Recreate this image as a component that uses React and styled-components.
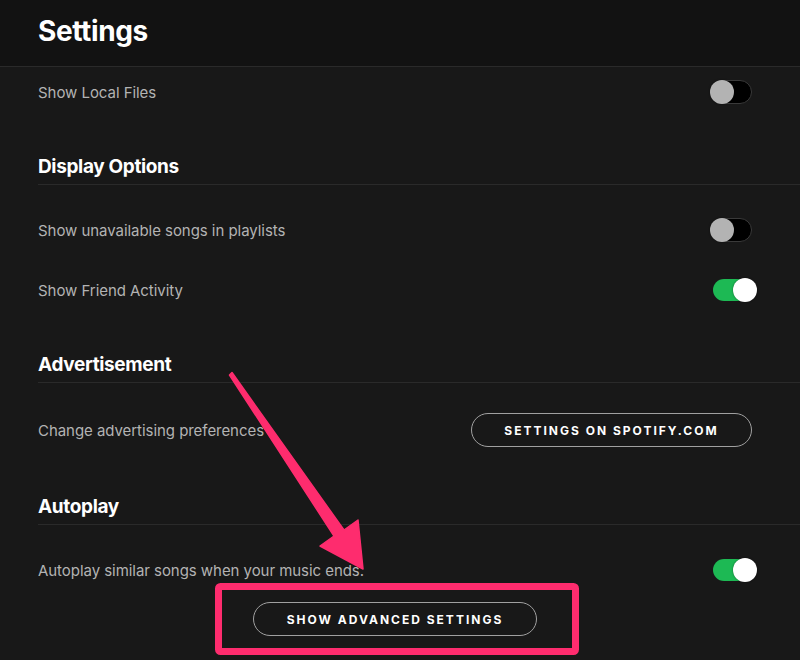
import React from 'react'
import styled, { createGlobalStyle } from 'styled-components'

const GlobalStyle = createGlobalStyle`
  html, body {
    margin: 0;
    background: #181818;
  }
  * { box-sizing: border-box; }
`

const Page = styled.div`
  position: relative;
  width: 800px;
  height: 660px;
  overflow: hidden;
  background: #181818;
  font-family: Inter, "Liberation Sans", sans-serif;
  color: #b3b3b3;
`

const Header = styled.header`
  height: 67px;
  background: #121212;
  border-bottom: 1px solid #2a2a2a;
  padding: 14px 38px 0;
`

const Title = styled.h1`
  margin: 0;
  font-size: 28px;
  line-height: 34px;
  font-weight: 700;
  color: #fff;
  letter-spacing: -0.4px;
`

const Content = styled.main`
  padding-left: 38px;
`

const Section = styled.section`
  padding-top: ${p => p.$top || 0}px;
`

const Heading = styled.h2`
  margin: 0 0 15px;
  padding-top: 1px;
  padding-bottom: 5px;
  border-bottom: 1px solid #2a2a2a;
  font-size: 19px;
  line-height: 24px;
  font-weight: 700;
  color: #fff;
  letter-spacing: -0.35px;
`

const Row = styled.div`
  display: flex;
  align-items: center;
  justify-content: space-between;
  height: ${p => p.$h || 60}px;
  padding-right: 43px;
`

const Label = styled.span`
  font-size: 15px;
  color: #b3b3b3;
  letter-spacing: -0.05px;
`

const Switch = styled.div`
  position: relative;
  width: 47px;
  height: 24px;
`

const Track = styled.div`
  position: absolute;
  top: ${p => (p.$on ? 1 : 0)}px;
  left: ${p => (p.$on ? 3 : 0)}px;
  width: ${p => (p.$on ? 40 : 42)}px;
  height: ${p => (p.$on ? 22 : 24)}px;
  border-radius: 12px;
  background: ${p => (p.$on ? '#1db954' : '#000')};
  border: ${p => (p.$on ? 'none' : '1px solid #3a3a3a')};
`

const Knob = styled.div`
  position: absolute;
  top: 0;
  left: ${p => (p.$on ? 23 : 0)}px;
  width: 24px;
  height: 24px;
  border-radius: 50%;
  background: ${p => (p.$on ? '#fff' : '#b3b3b3')};
  box-shadow: 0 0 2px rgba(0, 0, 0, 0.5);
`

const Pill = styled.button`
  width: ${p => p.$w}px;
  height: 34px;
  margin-right: ${p => p.$mr || 0}px;
  border-radius: 17px;
  border: 1px solid #a0a0a0;
  background: transparent;
  color: #fff;
  font-family: inherit;
  font-size: 12px;
  font-weight: 700;
  letter-spacing: 2px;
  text-transform: uppercase;
  padding: 0;
`

const Footer = styled.div`
  display: flex;
  justify-content: center;
  padding: 2px 48px 0 0;
`

const Overlay = styled.svg`
  position: absolute;
  inset: 0;
  pointer-events: none;
`

const Toggle = ({ on }) => (
  <Switch>
    <Track $on={on} />
    <Knob $on={on} />
  </Switch>
)

export default function App() {
  return (
    <Page>
      <GlobalStyle />
      <Header>
        <Title>Settings</Title>
      </Header>
      <Content>
        <Row $h={50}>
          <Label>Show Local Files</Label>
          <Toggle />
        </Row>

        <Section $top={37}>
          <Heading>Display Options</Heading>
          <Row>
            <Label>Show unavailable songs in playlists</Label>
            <Toggle />
          </Row>
          <Row>
            <Label>Show Friend Activity</Label>
            <Toggle on />
          </Row>
        </Section>

        <Section $top={32}>
          <Heading>Advertisement</Heading>
          <Row $h={64}>
            <Label>Change advertising preferences</Label>
            <Pill $w={281} $mr={5}>Settings on Spotify.com</Pill>
          </Row>
        </Section>

        <Section $top={32}>
          <Heading>Autoplay</Heading>
          <Row>
            <Label>Autoplay similar songs when your music ends.</Label>
            <Toggle on />
          </Row>
        </Section>

        <Footer>
          <Pill $w={284}>Show advanced settings</Pill>
        </Footer>
      </Content>

      <Overlay width="800" height="660" viewBox="0 0 800 660">
        <polygon
          points="232,372.5 344,530 358,520 363,569 320,546 334,536 229.5,375"
          fill="#fe2c6e"
          stroke="#fe2c6e"
          strokeWidth="1.5"
          strokeLinejoin="round"
        />
        <rect x="218.5" y="586.5" width="357" height="65" rx="2" fill="none" stroke="#fe2c6e" strokeWidth="7" />
      </Overlay>
    </Page>
  )
}
